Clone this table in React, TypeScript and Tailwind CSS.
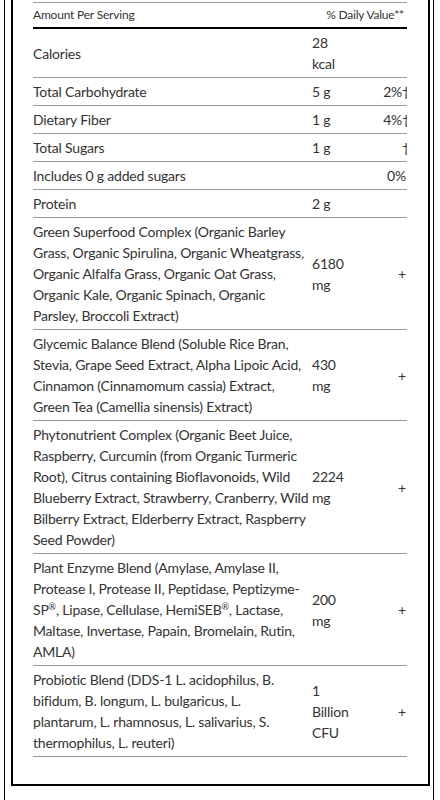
import type { ReactNode } from "react";

type Row = {
  name: ReactNode[];
  amount: string[];
  dv?: string;
  dagger?: boolean;
};

const Reg = () => <sup className="text-[9px] top-[-0.6em]">®</sup>;

const rows: Row[] = [
  { name: ["Calories"], amount: ["28", "kcal"] },
  { name: ["Total Carbohydrate"], amount: ["5 g"], dv: "2%", dagger: true },
  { name: ["Dietary Fiber"], amount: ["1 g"], dv: "4%", dagger: true },
  { name: ["Total Sugars"], amount: ["1 g"], dagger: true },
  { name: ["Includes 0 g added sugars"], amount: [], dv: "0%" },
  { name: ["Protein"], amount: ["2 g"] },
  {
    name: [
      "Green Superfood Complex (Organic Barley",
      "Grass, Organic Spirulina, Organic Wheatgrass,",
      "Organic Alfalfa Grass, Organic Oat Grass,",
      "Organic Kale, Organic Spinach, Organic",
      "Parsley, Broccoli Extract)",
    ],
    amount: ["6180", "mg"],
    dv: "+",
  },
  {
    name: [
      "Glycemic Balance Blend (Soluble Rice Bran,",
      "Stevia, Grape Seed Extract, Alpha Lipoic Acid,",
      "Cinnamon (Cinnamomum cassia) Extract,",
      "Green Tea (Camellia sinensis) Extract)",
    ],
    amount: ["430", "mg"],
    dv: "+",
  },
  {
    name: [
      "Phytonutrient Complex (Organic Beet Juice,",
      "Raspberry, Curcumin (from Organic Turmeric",
      "Root), Citrus containing Bioflavonoids, Wild",
      "Blueberry Extract, Strawberry, Cranberry, Wild",
      "Bilberry Extract, Elderberry Extract, Raspberry",
      "Seed Powder)",
    ],
    amount: ["2224", "mg"],
    dv: "+",
  },
  {
    name: [
      "Plant Enzyme Blend (Amylase, Amylase II,",
      "Protease I, Protease II, Peptidase, Peptizyme-",
      <>
        SP<Reg />, Lipase, Cellulase, HemiSEB<Reg />, Lactase,
      </>,
      "Maltase, Invertase, Papain, Bromelain, Rutin,",
      "AMLA)",
    ],
    amount: ["200", "mg"],
    dv: "+",
  },
  {
    name: [
      "Probiotic Blend (DDS-1 L. acidophilus, B.",
      "bifidum, B. longum, L. bulgaricus, L.",
      "plantarum, L. rhamnosus, L. salivarius, S.",
      "thermophilus, L. reuteri)",
    ],
    amount: ["1", "Billion", "CFU"],
    dv: "+",
  },
];

export default function App() {
  return (
    <div
      className="min-h-screen bg-white text-[#333]"
      style={{ fontFamily: "Lato, 'Liberation Sans', sans-serif" }}
    >
      <div className="ml-[4px] mr-[6px] border-l border-r border-black pl-[6px] pr-[3px] pb-[40px]">
        <div className="border-l-2 border-r-2 border-b-2 border-black pl-[20px] pr-[21px] pt-[2px] pb-[27px]">
          <div className="w-[374px] overflow-hidden">
            <div className="flex justify-between border-t border-[#999] border-b-2 border-b-black py-[3px] text-[12px] leading-[18px] tracking-[-0.2px]">
              <span>Amount Per Serving</span>
              <span className="pr-[3px]">% Daily Value**</span>
            </div>
            {rows.map((row, i) => (
              <div
                key={i}
                className="grid grid-cols-[279px_60px_1fr] border-b border-[#999] py-[3px] text-[14px] leading-[21px] tracking-[-0.2px]"
              >
                <div className="self-center">
                  {row.name.map((line, j) => (
                    <div key={j} className="whitespace-nowrap">
                      {line}
                    </div>
                  ))}
                </div>
                <div className="self-center">
                  {row.amount.map((a, j) => (
                    <div key={j}>{a}</div>
                  ))}
                </div>
                <div className="self-center text-right whitespace-nowrap pr-[1px]">
                  {row.dv}
                  {row.dagger && (
                    <span className="inline-block -mr-[4px]">†</span>
                  )}
                </div>
              </div>
            ))}
          </div>
        </div>
      </div>
    </div>
  );
}
